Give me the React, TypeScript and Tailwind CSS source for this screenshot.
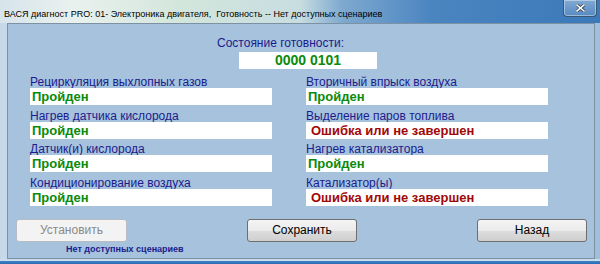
const rows = [
  {
    left: { label: 'Рециркуляция выхлопных газов', ok: true },
    right: { label: 'Вторичный впрыск воздуха', ok: true },
    labelH: 'h-[17px]',
  },
  {
    left: { label: 'Нагрев датчика кислорода', ok: true },
    right: { label: 'Выделение паров топлива', ok: false },
    labelH: 'h-[17px]',
  },
  {
    left: { label: 'Датчик(и) кислорода', ok: true },
    right: { label: 'Нагрев катализатора', ok: true },
    labelH: 'h-[16px]',
  },
  {
    left: { label: 'Кондиционирование воздуха', ok: true },
    right: { label: 'Катализатор(ы)', ok: false },
    labelH: 'h-[17px]',
  },
];

const font = 'font-["Liberation_Sans",Arial,sans-serif]';

function Monitor({ label, ok, labelH }: { label: string; ok: boolean; labelH: string }) {
  return (
    <div className="flex flex-col">
      <div className={`${labelH} flex items-end text-[12px] leading-[12px] text-[#1c1c8c]`}>
        {label}
      </div>
      <div
        className={`h-[17px] bg-white text-[13px] font-bold leading-[17px] ${
          ok ? 'pl-[2px] text-[#0b8a0b]' : 'pl-[5px] text-[#a00808]'
        }`}
      >
        {ok ? 'Пройден' : 'Ошибка или не завершен'}
      </div>
    </div>
  );
}

function WinButton({ children, disabled }: { children: string; disabled?: boolean }) {
  return (
    <button
      disabled={disabled}
      className={`h-[23px] rounded-[3px] border text-[12px] leading-[21px] ${
        disabled
          ? 'w-[111px] border-[#b6bcc1] bg-[#f3f3f3] text-[#8a8a8a]'
          : 'w-[110px] border-[#6f6f6f] bg-[linear-gradient(#f4f4f4_0%,#ebebeb_50%,#dddddd_51%,#cfcfcf_100%)] text-black'
      }`}
    >
      {children}
    </button>
  );
}

export default function App() {
  return (
    <div
      className={`flex h-[264px] w-[600px] flex-col overflow-hidden bg-[linear-gradient(to_right,#c6d9e8_0%,#b9d0e4_60%,#9fbfdd_100%)] ${font}`}
    >
      {/* Title bar */}
      <div className="flex h-[23px] shrink-0 justify-between bg-[linear-gradient(to_right,#d7e4ec_0%,#e9f1ee_12%,#d3e6dc_30%,#c7dde0_50%,#7ea9d0_57%,#4a85c0_72%,#3c79b9_100%)]">
        <div className="pl-[4px] pt-[8px] text-[9px] leading-[12px] text-black">
          ВАСЯ диагност PRO: 01- Электроника двигателя,&nbsp; Готовность -- Нет доступных сценариев
        </div>
        <div className="mr-[3px] flex h-[17px] w-[34px] items-center justify-center rounded-b-[4px] border border-t-0 border-[#3a5773] bg-[linear-gradient(rgba(255,255,255,0.35),rgba(255,255,255,0.12))] shadow-[inset_0_0_0_1px_rgba(255,255,255,0.4)]">
          <svg width="9" height="8" viewBox="0 0 9 8">
            <path d="M1 1 L8 7 M8 1 L1 7" stroke="#2a3a4c" strokeWidth="3" strokeLinecap="square" />
            <path d="M1 1 L8 7 M8 1 L1 7" stroke="#ffffff" strokeWidth="1.6" strokeLinecap="square" />
          </svg>
        </div>
      </div>

      {/* Client area */}
      <div className="mx-[7px] h-[236px] w-[588px] shrink-0 border border-[#7d91a4] bg-[#a6c2dd]">
        <div className="ml-[209px] pt-[12px] text-[12px] leading-[14px] text-[#1c1c8c]">
          Состояние готовности:
        </div>
        <div className="ml-[231px] mt-[2px] h-[17px] w-[138px] bg-white text-center text-[14px] font-bold leading-[17px] text-[#0b8a0b]">
          0000 0101
        </div>

        <div className="mt-[2px] grid grid-cols-[242px_242px] gap-x-[34px] pl-[22px]">
          {rows.map((r) => (
            <div key={r.left.label} className="contents">
              <Monitor label={r.left.label} ok={r.left.ok} labelH={r.labelH} />
              <Monitor label={r.right.label} ok={r.right.ok} labelH={r.labelH} />
            </div>
          ))}
        </div>

        <div className="mt-[13px] flex justify-between pl-[8px] pr-[7px]">
          <WinButton disabled>Установить</WinButton>
          <WinButton>Сохранить</WinButton>
          <WinButton>Назад</WinButton>
        </div>
        <div className="mt-[2px] pl-[58px] text-[9px] font-bold leading-[11px] text-[#1c1c8c]">
          Нет доступных сценариев
        </div>
      </div>

      {/* Bottom frame / taskbar edge */}
      <div className="h-[5px] w-full shrink-0 bg-[linear-gradient(#c9dcec_0%,#c9dcec_40%,#3f82c6_41%,#2a6cb4_100%)]" />
    </div>
  );
}
